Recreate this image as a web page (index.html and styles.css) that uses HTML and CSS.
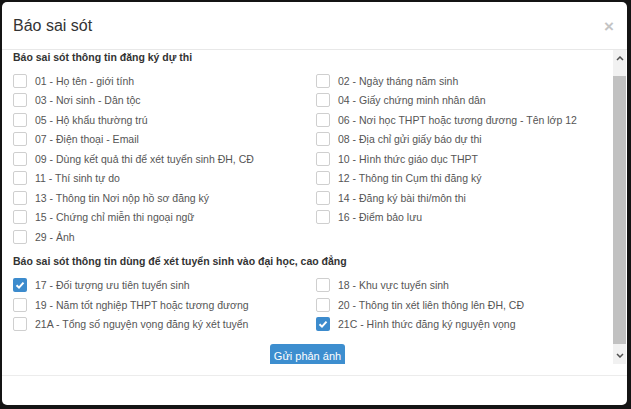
FILE: index.html
```html
<!DOCTYPE html>
<html lang="vi">
<head>
  <meta charset="UTF-8">
  <title>Báo sai sót</title>
  <link rel="stylesheet" href="styles.css">
</head>
<body>

  <div class="modal">
    <!-- Header -->
    <div class="modal-header">
      <h4 class="modal-title">Báo sai sót</h4>
      <span class="close">&times;</span>
    </div>

    <!-- Body with scroll area -->
    <div class="modal-body">
      <div class="scroll-content">
        <h5 class="group-title">Báo sai sót thông tin đăng ký dự thi</h5>
        <div class="options">
          <label class="opt"><span class="cb"></span>01 - Họ tên - giới tính</label>
          <label class="opt"><span class="cb"></span>02 - Ngày tháng năm sinh</label>
          <label class="opt"><span class="cb"></span>03 - Nơi sinh - Dân tộc</label>
          <label class="opt"><span class="cb"></span>04 - Giấy chứng minh nhân dân</label>
          <label class="opt"><span class="cb"></span>05 - Hộ khẩu thường trú</label>
          <label class="opt"><span class="cb"></span>06 - Nơi học THPT hoặc tương đương - Tên lớp 12</label>
          <label class="opt"><span class="cb"></span>07 - Điện thoại - Email</label>
          <label class="opt"><span class="cb"></span>08 - Địa chỉ gửi giấy báo dự thi</label>
          <label class="opt"><span class="cb"></span>09 - Dùng kết quả thi để xét tuyển sinh ĐH, CĐ</label>
          <label class="opt"><span class="cb"></span>10 - Hình thức giáo dục THPT</label>
          <label class="opt"><span class="cb"></span>11 - Thí sinh tự do</label>
          <label class="opt"><span class="cb"></span>12 - Thông tin Cụm thi đăng ký</label>
          <label class="opt"><span class="cb"></span>13 - Thông tin Nơi nộp hồ sơ đăng ký</label>
          <label class="opt"><span class="cb"></span>14 - Đăng ký bài thi/môn thi</label>
          <label class="opt"><span class="cb"></span>15 - Chứng chỉ miễn thi ngoại ngữ</label>
          <label class="opt"><span class="cb"></span>16 - Điểm bảo lưu</label>
          <label class="opt"><span class="cb"></span>29 - Ảnh</label>
        </div>

        <h5 class="group-title second">Báo sai sót thông tin dùng để xét tuyển sinh vào đại học, cao đẳng</h5>
        <div class="options">
          <label class="opt"><span class="cb checked"><svg viewBox="0 0 14 14" width="14" height="14"><polyline points="3.5,7.2 6,9.6 10.5,4.6" fill="none" stroke="#fff" stroke-width="2"/></svg></span>17 - Đối tượng ưu tiên tuyển sinh</label>
          <label class="opt"><span class="cb"></span>18 - Khu vực tuyển sinh</label>
          <label class="opt"><span class="cb"></span>19 - Năm tốt nghiệp THPT hoặc tương đương</label>
          <label class="opt"><span class="cb"></span>20 - Thông tin xét liên thông lên ĐH, CĐ</label>
          <label class="opt"><span class="cb"></span>21A - Tổng số nguyện vọng đăng ký xét tuyển</label>
          <label class="opt"><span class="cb checked"><svg viewBox="0 0 14 14" width="14" height="14"><polyline points="3.5,7.2 6,9.6 10.5,4.6" fill="none" stroke="#fff" stroke-width="2"/></svg></span>21C - Hình thức đăng ký nguyện vọng</label>
        </div>

        <div class="actions">
          <button class="btn-send">Gửi phản ánh</button>
        </div>
      </div>

      <!-- Scrollbar -->
      <div class="scrollbar">
        <div class="sb-btn">
          <svg viewBox="0 0 8 5" width="8" height="5"><polyline points="1,4 4,1 7,4" fill="none" stroke="#505050" stroke-width="1.5"/></svg>
        </div>
        <div class="sb-track"><div class="sb-thumb"></div></div>
        <div class="sb-btn">
          <svg viewBox="0 0 8 5" width="8" height="5"><polyline points="1,1 4,4 7,1" fill="none" stroke="#505050" stroke-width="1.5"/></svg>
        </div>
      </div>
    </div>

    <!-- Footer -->
    <div class="modal-footer"></div>
  </div>

</body>
</html>
```

FILE: styles.css
```css
body {
  margin: 0;
  padding: 2px 4px 4px 2px;
  background-color: #141414;
  font-family: 'Liberation Sans', Arial, sans-serif;
  height: 409px;
  box-sizing: border-box;
  overflow: hidden;
}

.modal {
  background: #fff;
  border-radius: 5px;
  height: 403px;
  display: flex;
  flex-direction: column;
}

.modal-header {
  height: 47px;
  border-bottom: 1px solid #e8e8e8;
  display: flex;
  align-items: center;
  justify-content: space-between;
  padding: 0 13px 0 11px;
}

.modal-title {
  margin: 0;
  font-size: 16px;
  font-weight: normal;
  color: #333;
}

.close {
  font-size: 17px;
  font-weight: bold;
  color: #c4c4c4;
  line-height: 1;
  margin-top: 2px;
}

.modal-body {
  height: 314px;
  display: flex;
}

.scroll-content {
  flex: 1;
  overflow: hidden;
  padding-left: 11px;
}

.group-title {
  margin: 0 0 7px;
  font-size: 10.5px;
  line-height: 14px;
  font-weight: bold;
  color: #333;
}

.group-title.second {
  margin-top: 7px;
  margin-bottom: 8px;
}

.options {
  display: grid;
  grid-template-columns: 303px 1fr;
}

.opt {
  display: flex;
  align-items: center;
  gap: 8px;
  height: 19.5px;
  font-size: 10.5px;
  color: #555;
  white-space: nowrap;
}

.cb {
  width: 14px;
  height: 14px;
  box-sizing: border-box;
  border: 1px solid #cfcfcf;
  border-radius: 2px;
  background: #fff;
  flex-shrink: 0;
  display: flex;
}

.cb.checked {
  border: none;
  background: #3c8bcd;
}

.actions {
  display: flex;
  justify-content: center;
  margin: 10px 0 0 -11px;
}

.btn-send {
  font-family: inherit;
  font-size: 11px;
  color: #fff;
  background: #3d8ecf;
  border: none;
  border-radius: 3px;
  height: 25px;
  padding: 0 4px;
  line-height: 25px;
}

.scrollbar {
  width: 13px;
  margin-right: 1px;
  background: #f1f1f1;
  display: flex;
  flex-direction: column;
}

.sb-btn {
  height: 17px;
  display: flex;
  align-items: center;
  justify-content: center;
}

.sb-track {
  flex: 1;
  padding: 9px 0 3px;
  display: flex;
}

.sb-thumb {
  flex: 1;
  background: #c1c1c1;
}

.modal-footer {
  margin-top: 11px;
  border-top: 1px solid #ececec;
  flex: 1;
}
```
